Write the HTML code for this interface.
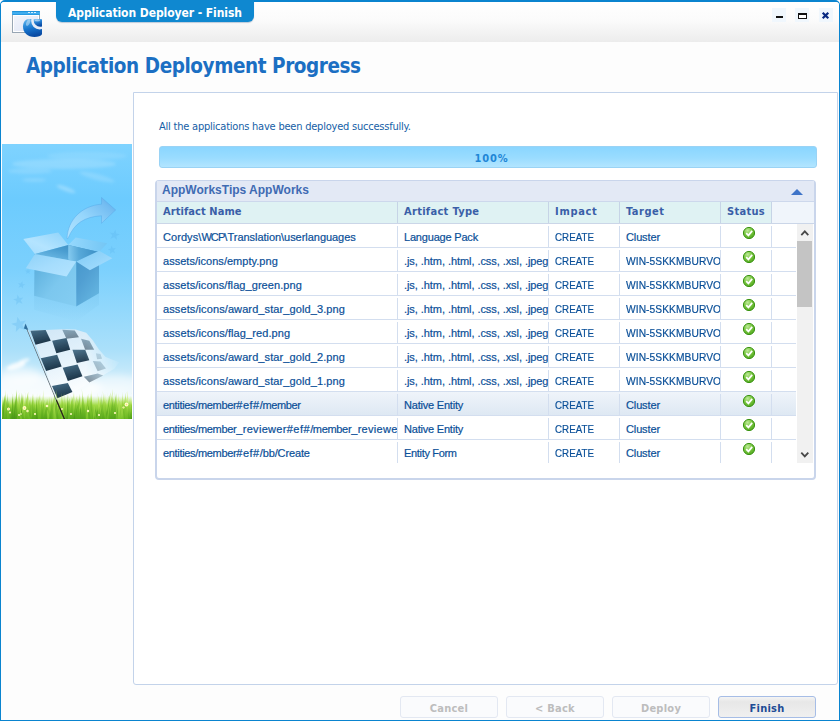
<!DOCTYPE html>
<html>
<head>
<meta charset="utf-8">
<title>Application Deployer - Finish</title>
<style>
html,body{margin:0;padding:0;}
body{width:840px;height:721px;overflow:hidden;background:#fff;position:relative;font-family:"Liberation Sans",sans-serif;}
.abs{position:absolute;}
#frame{left:0;top:0;width:838px;height:718px;border:1px solid #0a84cf;border-top:2px solid #0a84cf;border-radius:5px 5px 0 0;background:#fdfdfd;overflow:hidden;}
#hdr{left:1px;top:2px;width:838px;height:40px;border-radius:3px 3px 0 0;background:linear-gradient(#ffffff 0%,#fbfbfb 45%,#ececec 100%);}
#tab{left:56px;top:0;width:198px;height:22px;background:#0f88d0;border-radius:0 0 6px 6px;box-shadow:0 1px 1px rgba(0,60,120,.25);color:#fff;font:bold 12px "DejaVu Sans Condensed","DejaVu Sans",sans-serif;line-height:26px;}
#tab span{position:absolute;left:12px;top:0;white-space:nowrap;letter-spacing:-0.07px;}
.wb{top:8px;width:14px;height:14px;background:#f0f7fd;}
#title{left:26px;top:53px;font:bold 20.5px "DejaVu Sans Condensed","DejaVu Sans",sans-serif;color:#1b6fc3;white-space:nowrap;letter-spacing:-0.44px;line-height:26px;}
#panel{left:133px;top:92px;width:703px;height:591px;border:1px solid #c3d3ea;border-radius:0 0 3px 3px;background:#fff;}
#msg{left:159px;top:120px;letter-spacing:-0.22px;font:11px "DejaVu Sans Condensed","DejaVu Sans",sans-serif;color:#155ea6;white-space:nowrap;line-height:14px;}
#prog{left:159px;top:146px;width:656px;height:20px;border:1px solid #9ad3f5;border-radius:3px;background:linear-gradient(#8ad6ff 0%,#9adcff 55%,#b2e5ff 100%);text-align:center;font:bold 11px "DejaVu Sans Condensed","DejaVu Sans",sans-serif;color:#1f86d6;line-height:23px;letter-spacing:.9px;text-indent:7px;}
#grp{left:155px;top:180px;width:657px;height:297px;border:2px solid #c9d5eb;border-top-width:1px;border-radius:4px;background:#fff;}
#grph{left:157px;top:181px;width:657px;height:20px;background:#e3e9f5;border-bottom:1px solid #cdd8ec;font:bold 12px "Liberation Sans",sans-serif;color:#3f6bb3;line-height:19px;}
#colh{left:157px;top:202px;width:657px;height:21px;background:#f0f5fb;border-bottom:1px solid #cbd6e8;}
.ch{position:absolute;top:0;height:21px;background:#dff2f3;border-right:1px solid #c6d4e6;font:bold 11px "DejaVu Sans Condensed","DejaVu Sans",sans-serif;color:#3a5fa8;line-height:19px;text-indent:6px;white-space:nowrap;overflow:hidden;letter-spacing:.15px;}
.row{position:absolute;left:157px;width:639px;height:23px;border-bottom:1px solid #d3deef;font:11px "Liberation Sans",sans-serif;color:#0a4f98;letter-spacing:0.07px;-webkit-text-stroke:0.2px #0a4f98;}
.row.last{border-bottom:none;}
.row.last .c{height:21px;}
.row.sel{background:linear-gradient(#eff4fa,#dee8f3);}
.c{position:absolute;top:2px;height:22px;border-right:1px solid #d3deef;line-height:23px;text-indent:6px;white-space:nowrap;overflow:hidden;}
.c1{left:0;width:240px;}
.c2{left:241px;width:150px;}
.c3{left:392px;width:70px;}
.c4{left:463px;width:100px;}
.c5{left:564px;width:50px;}
.ok{position:absolute;left:21px;top:0px;width:14px;height:14px;}
.sx{display:inline-block;transform-origin:0 50%;text-indent:0;}
.btn{top:696px;width:96px;height:20px;border:1px solid #e3e8f2;border-radius:3px;background:#fafbfd;text-align:center;font:bold 11px "DejaVu Sans Condensed","DejaVu Sans",sans-serif;color:#bdbdbd;line-height:23px;letter-spacing:.25px;}
#fin{border-color:#a6bde6;background:linear-gradient(#f4f4f4 0%,#e7e7e7 25%,#f0f0f0 100%);color:#1e4c95;}
</style>
</head>
<body>
<div id="frame" class="abs"></div>
<div id="hdr" class="abs"></div>
<div id="tab" class="abs"><span>Application Deployer - Finish</span></div>

<!-- app icon -->
<svg class="abs" style="left:8px;top:6px" width="40" height="40" viewBox="8 6 40 40">
<defs>
<linearGradient id="tb" x1="0" y1="0" x2="0" y2="1"><stop offset="0" stop-color="#0f86d4"/><stop offset=".5" stop-color="#4fb8f5"/><stop offset="1" stop-color="#1a8fdc"/></linearGradient>
<linearGradient id="wb" x1="0" y1="0" x2="1" y2="1"><stop offset="0" stop-color="#f2f4fb"/><stop offset="1" stop-color="#dfe5f5"/></linearGradient>
<linearGradient id="cg" x1="0" y1="0" x2="0.25" y2="1"><stop offset="0" stop-color="#6fbdf0"/><stop offset=".3" stop-color="#3a97df"/><stop offset=".6" stop-color="#1673cc"/><stop offset="1" stop-color="#0a4ca4"/></linearGradient>
<linearGradient id="cg2" x1="0" y1=".45" x2="0.15" y2="1"><stop offset="0" stop-color="#8ccbf4"/><stop offset=".4" stop-color="#2a86d8"/><stop offset="1" stop-color="#0a4ca4"/></linearGradient>
<clipPath id="cc"><rect x="20" y="19" width="22" height="21" rx="1"/></clipPath>
</defs>
<rect x="12.5" y="11.5" width="27" height="21" fill="#fff" stroke="#98a6b4" stroke-width="1"/>
<rect x="14" y="16" width="24" height="15" fill="url(#wb)"/>
<rect x="12" y="11" width="28" height="4" rx="1" fill="url(#tb)"/>
<rect x="28" y="12" width="2" height="1" fill="#d8f0ff"/><rect x="31" y="12" width="2" height="1" fill="#d8f0ff"/><rect x="34" y="12" width="2" height="1" fill="#d8f0ff"/>
<g clip-path="url(#cc)">
<path d="M29,19 H42 V34.2 C41,36 38,37 34.5,37 C27.5,37 23,32.5 23,26.5 C23,22 25.5,19 29,19 Z" fill="url(#cg)"/>
<circle cx="39.6" cy="21" r="8.4" fill="#e6ecf7"/>
<circle cx="40.2" cy="20.1" r="6.6" fill="url(#cg2)"/>
<ellipse cx="28.2" cy="22.5" rx="1.7" ry="3.6" fill="#fff" opacity=".4" transform="rotate(25 28.2 22.5)"/><ellipse cx="37.5" cy="20.6" rx="2.6" ry="1" fill="#fff" opacity=".45"/>
</g>
</svg>

<!-- window buttons -->
<div class="abs wb" style="left:772px"></div>
<div class="abs wb" style="left:795px"></div>
<div class="abs wb" style="left:819px"></div>
<svg class="abs" style="left:772px;top:8px" width="62" height="14" viewBox="772 8 62 14">
<rect x="776" y="16" width="7" height="2" fill="#111"/>
<rect x="798.5" y="13.5" width="8" height="5" fill="#fff" stroke="#111" stroke-width="1"/><rect x="798" y="13" width="9" height="2" fill="#111"/>
<path d="M822.7 12.7 L828.3 18.3 M828.3 12.7 L822.7 18.3" stroke="#0a2a82" stroke-width="2.2"/>
</svg>

<div id="title" class="abs">Application Deployment Progress</div>

<div id="panel" class="abs"></div>
<div id="msg" class="abs">All the applications have been deployed successfully.</div>
<div id="prog" class="abs">100%</div>

<div id="grp" class="abs"></div>
<div id="grph" class="abs"><span style="margin-left:5px">AppWorksTips AppWorks</span></div>
<svg class="abs" style="left:790px;top:187px" width="14" height="10"><path d="M1 8 L7 2 L13 8 Z" fill="#3f74c8"/></svg>
<div id="colh" class="abs">
<div class="ch" style="left:0;width:240px;letter-spacing:.07px">Artifact Name</div>
<div class="ch" style="left:241px;width:150px;letter-spacing:.3px">Artifact Type</div>
<div class="ch" style="left:392px;width:70px;letter-spacing:.7px">Impact</div>
<div class="ch" style="left:463px;width:100px;letter-spacing:.5px">Target</div>
<div class="ch" style="left:564px;width:50px;letter-spacing:.3px">Status</div>
</div>

<svg width="0" height="0" style="position:absolute"><defs>
<radialGradient id="okg" cx="0.38" cy="0.28" r="0.8"><stop offset="0" stop-color="#bdea98"/><stop offset=".45" stop-color="#7cc843"/><stop offset="1" stop-color="#4ea51b"/></radialGradient>
</defs></svg>
<div class="row" style="top:224px"><div class="c c1">Cordys\<span style="letter-spacing:-0.9px">WCP</span>\<span style="letter-spacing:-0.04px">Translation\userlanguages</span></div><div class="c c2"><span style="letter-spacing:-0.19px">Language Pack</span></div><div class="c c3"><span class="sx" style="transform:scaleX(0.885)">CREATE</span></div><div class="c c4"><span style="letter-spacing:-0.13px">Cluster</span></div><div class="c c5"><svg class="ok" viewBox="0 0 14 14"><circle cx="7" cy="7" r="5.6" fill="url(#okg)" stroke="#3a9412" stroke-width="1"/><path d="M4.2 7.1 L6.4 9.4 L10.2 4.9" fill="none" stroke="#fff" stroke-width="1.7"/></svg></div></div>
<div class="row" style="top:248px"><div class="c c1"><span style="letter-spacing:0.03px">assets/icons/empty.png</span></div><div class="c c2"><span style="letter-spacing:-0.065px">.js, .htm, .html, .css, .xsl, .jpeg</span></div><div class="c c3"><span class="sx" style="transform:scaleX(0.885)">CREATE</span></div><div class="c c4"><span class="sx" style="transform:scaleX(0.93)">WIN-5SKKMBURVO</span></div><div class="c c5"><svg class="ok" viewBox="0 0 14 14"><circle cx="7" cy="7" r="5.6" fill="url(#okg)" stroke="#3a9412" stroke-width="1"/><path d="M4.2 7.1 L6.4 9.4 L10.2 4.9" fill="none" stroke="#fff" stroke-width="1.7"/></svg></div></div>
<div class="row" style="top:272px"><div class="c c1">assets/icons/flag_green.png</div><div class="c c2"><span style="letter-spacing:-0.065px">.js, .htm, .html, .css, .xsl, .jpeg</span></div><div class="c c3"><span class="sx" style="transform:scaleX(0.885)">CREATE</span></div><div class="c c4"><span class="sx" style="transform:scaleX(0.93)">WIN-5SKKMBURVO</span></div><div class="c c5"><svg class="ok" viewBox="0 0 14 14"><circle cx="7" cy="7" r="5.6" fill="url(#okg)" stroke="#3a9412" stroke-width="1"/><path d="M4.2 7.1 L6.4 9.4 L10.2 4.9" fill="none" stroke="#fff" stroke-width="1.7"/></svg></div></div>
<div class="row" style="top:296px"><div class="c c1"><span style="letter-spacing:0.1px">assets/icons/award_star_gold_3.png</span></div><div class="c c2"><span style="letter-spacing:-0.065px">.js, .htm, .html, .css, .xsl, .jpeg</span></div><div class="c c3"><span class="sx" style="transform:scaleX(0.885)">CREATE</span></div><div class="c c4"><span class="sx" style="transform:scaleX(0.93)">WIN-5SKKMBURVO</span></div><div class="c c5"><svg class="ok" viewBox="0 0 14 14"><circle cx="7" cy="7" r="5.6" fill="url(#okg)" stroke="#3a9412" stroke-width="1"/><path d="M4.2 7.1 L6.4 9.4 L10.2 4.9" fill="none" stroke="#fff" stroke-width="1.7"/></svg></div></div>
<div class="row" style="top:320px"><div class="c c1"><span style="letter-spacing:0.1px">assets/icons/flag_red.png</span></div><div class="c c2"><span style="letter-spacing:-0.065px">.js, .htm, .html, .css, .xsl, .jpeg</span></div><div class="c c3"><span class="sx" style="transform:scaleX(0.885)">CREATE</span></div><div class="c c4"><span class="sx" style="transform:scaleX(0.93)">WIN-5SKKMBURVO</span></div><div class="c c5"><svg class="ok" viewBox="0 0 14 14"><circle cx="7" cy="7" r="5.6" fill="url(#okg)" stroke="#3a9412" stroke-width="1"/><path d="M4.2 7.1 L6.4 9.4 L10.2 4.9" fill="none" stroke="#fff" stroke-width="1.7"/></svg></div></div>
<div class="row" style="top:344px"><div class="c c1"><span style="letter-spacing:0.1px">assets/icons/award_star_gold_2.png</span></div><div class="c c2"><span style="letter-spacing:-0.065px">.js, .htm, .html, .css, .xsl, .jpeg</span></div><div class="c c3"><span class="sx" style="transform:scaleX(0.885)">CREATE</span></div><div class="c c4"><span class="sx" style="transform:scaleX(0.93)">WIN-5SKKMBURVO</span></div><div class="c c5"><svg class="ok" viewBox="0 0 14 14"><circle cx="7" cy="7" r="5.6" fill="url(#okg)" stroke="#3a9412" stroke-width="1"/><path d="M4.2 7.1 L6.4 9.4 L10.2 4.9" fill="none" stroke="#fff" stroke-width="1.7"/></svg></div></div>
<div class="row" style="top:368px"><div class="c c1"><span style="letter-spacing:0.1px">assets/icons/award_star_gold_1.png</span></div><div class="c c2"><span style="letter-spacing:-0.065px">.js, .htm, .html, .css, .xsl, .jpeg</span></div><div class="c c3"><span class="sx" style="transform:scaleX(0.885)">CREATE</span></div><div class="c c4"><span class="sx" style="transform:scaleX(0.93)">WIN-5SKKMBURVO</span></div><div class="c c5"><svg class="ok" viewBox="0 0 14 14"><circle cx="7" cy="7" r="5.6" fill="url(#okg)" stroke="#3a9412" stroke-width="1"/><path d="M4.2 7.1 L6.4 9.4 L10.2 4.9" fill="none" stroke="#fff" stroke-width="1.7"/></svg></div></div>
<div class="row sel" style="top:392px"><div class="c c1"><span style="letter-spacing:-0.33px">entities/member</span><span style="letter-spacing:0.5px">#ef#</span><span style="letter-spacing:-0.38px">/member</span></div><div class="c c2"><span style="letter-spacing:-0.21px">Native Entity</span></div><div class="c c3"><span class="sx" style="transform:scaleX(0.885)">CREATE</span></div><div class="c c4"><span style="letter-spacing:-0.13px">Cluster</span></div><div class="c c5"><svg class="ok" viewBox="0 0 14 14"><circle cx="7" cy="7" r="5.6" fill="url(#okg)" stroke="#3a9412" stroke-width="1"/><path d="M4.2 7.1 L6.4 9.4 L10.2 4.9" fill="none" stroke="#fff" stroke-width="1.7"/></svg></div></div>
<div class="row" style="top:416px"><div class="c c1"><span style="letter-spacing:-0.33px">entities/member</span><span style="letter-spacing:0.3px">_reviewer</span><span style="letter-spacing:0.5px">#ef#</span><span style="letter-spacing:-0.33px">/member</span><span style="letter-spacing:0.3px">_reviewer</span></div><div class="c c2"><span style="letter-spacing:-0.21px">Native Entity</span></div><div class="c c3"><span class="sx" style="transform:scaleX(0.885)">CREATE</span></div><div class="c c4"><span style="letter-spacing:-0.13px">Cluster</span></div><div class="c c5"><svg class="ok" viewBox="0 0 14 14"><circle cx="7" cy="7" r="5.6" fill="url(#okg)" stroke="#3a9412" stroke-width="1"/><path d="M4.2 7.1 L6.4 9.4 L10.2 4.9" fill="none" stroke="#fff" stroke-width="1.7"/></svg></div></div>
<div class="row last" style="top:440px"><div class="c c1"><span style="letter-spacing:-0.33px">entities/member</span><span style="letter-spacing:0.5px">#ef#</span><span style="letter-spacing:-0.13px">/bb/Create</span></div><div class="c c2"><span style="letter-spacing:-0.32px">Entity Form</span></div><div class="c c3"><span class="sx" style="transform:scaleX(0.885)">CREATE</span></div><div class="c c4"><span style="letter-spacing:-0.13px">Cluster</span></div><div class="c c5"><svg class="ok" viewBox="0 0 14 14"><circle cx="7" cy="7" r="5.6" fill="url(#okg)" stroke="#3a9412" stroke-width="1"/><path d="M4.2 7.1 L6.4 9.4 L10.2 4.9" fill="none" stroke="#fff" stroke-width="1.7"/></svg></div></div>
<div class="abs" style="left:797px;top:224px;width:16px;height:239px;background:#f1f1f1"></div>
<div class="abs" style="left:797px;top:241px;width:15px;height:66px;background:#c4c4c4"></div>
<svg class="abs" style="left:797px;top:224px" width="16" height="239"><path d="M4.3 11.2 L7.8 7.4 L11.3 11.2" fill="none" stroke="#484848" stroke-width="1.8"/><path d="M4.3 228.6 L7.8 232.4 L11.3 228.6" fill="none" stroke="#484848" stroke-width="1.8"/></svg>
<div class="abs btn" style="left:400px">Cancel</div>
<div class="abs btn" style="left:506px">&lt; Back</div>
<div class="abs btn" style="left:612px">Deploy</div>
<div class="abs btn" id="fin" style="left:718px">Finish</div>
<svg class="abs" style="left:2px;top:144px" width="130" height="275" viewBox="0 0 130 275">
<defs>
<linearGradient id="sky" x1="0" y1="0" x2="0" y2="1">
<stop offset="0" stop-color="#7fd3ff"/><stop offset=".2" stop-color="#6ccbfe"/><stop offset=".45" stop-color="#7bd0fd"/><stop offset=".6" stop-color="#92d8fc"/><stop offset=".75" stop-color="#abe0fa"/><stop offset=".87" stop-color="#d2edfa"/><stop offset=".93" stop-color="#f0f9fd"/><stop offset="1" stop-color="#f4fbfd"/>
</linearGradient>
<filter id="b1" x="-20%" y="-50%" width="140%" height="200%"><feGaussianBlur stdDeviation="1.6"/></filter>
<filter id="b2" x="-20%" y="-50%" width="140%" height="200%"><feGaussianBlur stdDeviation="3.5"/></filter>
<filter id="b3"><feGaussianBlur stdDeviation="0.35"/></filter>
<linearGradient id="fl1" x1="1" y1="0" x2="0" y2="1"><stop offset="0" stop-color="#8ed3fa"/><stop offset=".6" stop-color="#b4e4ff"/><stop offset="1" stop-color="#a4dcfd"/></linearGradient>
<linearGradient id="fl2" x1="0" y1="0" x2="1" y2="0"><stop offset="0" stop-color="#96d8fd"/><stop offset="1" stop-color="#74c6f4"/></linearGradient>
<linearGradient id="fl3" x1="0" y1="0" x2="1" y2="1"><stop offset="0" stop-color="#8fd2f8"/><stop offset=".5" stop-color="#a6ddfd"/><stop offset="1" stop-color="#b4e4ff"/></linearGradient>
<linearGradient id="fl4" x1="0" y1="0" x2="1" y2="1"><stop offset="0" stop-color="#7fcaf5"/><stop offset="1" stop-color="#a8dfff"/></linearGradient>
<linearGradient id="in1" x1="0" y1="1" x2="1" y2="0"><stop offset="0" stop-color="#7cc6ee"/><stop offset=".55" stop-color="#4a9dd0"/><stop offset="1" stop-color="#3688bd"/></linearGradient>
<linearGradient id="in2" x1="0" y1="0" x2="1" y2="0"><stop offset="0" stop-color="#8fd2f5"/><stop offset=".35" stop-color="#5aabdb"/><stop offset="1" stop-color="#3a8ec4"/></linearGradient>
<linearGradient id="fa1" x1="0" y1="0" x2="1" y2="1"><stop offset="0" stop-color="#54a9d8"/><stop offset=".55" stop-color="#7cc7ee"/><stop offset="1" stop-color="#84cdf2"/></linearGradient>
<linearGradient id="fa2" x1="0" y1="0" x2=".6" y2="1"><stop offset="0" stop-color="#4396ca"/><stop offset=".5" stop-color="#519fd2"/><stop offset="1" stop-color="#63b4e0"/></linearGradient>
<linearGradient id="ar" x1="0" y1="1" x2="1" y2="0"><stop offset="0" stop-color="#b2e4ff"/><stop offset=".45" stop-color="#96d6fc"/><stop offset=".8" stop-color="#74bdf2"/><stop offset="1" stop-color="#5aa6e6"/></linearGradient>
<linearGradient id="rf" x1="0" y1="0" x2="0" y2="1"><stop offset="0" stop-color="#7cc6ee" stop-opacity=".45"/><stop offset="1" stop-color="#7cc6ee" stop-opacity="0"/></linearGradient>
<linearGradient id="fm" x1="0" y1="0" x2="1" y2="0"><stop offset="0" stop-color="#fff"/><stop offset=".62" stop-color="#fff"/><stop offset=".97" stop-color="#fff" stop-opacity="0"/></linearGradient>
<mask id="fmask" maskUnits="userSpaceOnUse" x="0" y="0" width="760" height="760"><rect x="0" y="0" width="760" height="760" fill="url(#fm)"/></mask>
<linearGradient id="fw" x1="0" y1="0" x2=".4" y2="1"><stop offset="0" stop-color="#cfe6f6"/><stop offset=".5" stop-color="#e4f2fb"/><stop offset="1" stop-color="#ffffff"/></linearGradient>
<linearGradient id="fd" x1="0" y1="0" x2=".3" y2="1"><stop offset="0" stop-color="#47708a"/><stop offset="1" stop-color="#1d3548"/></linearGradient>
<linearGradient id="g1" gradientUnits="userSpaceOnUse" x1="0" y1="242" x2="0" y2="275"><stop offset="0" stop-color="#e4f79a"/><stop offset=".4" stop-color="#a6dc44"/><stop offset="1" stop-color="#63b21e"/></linearGradient>
<linearGradient id="g2" gradientUnits="userSpaceOnUse" x1="0" y1="242" x2="0" y2="275"><stop offset="0" stop-color="#d2f07c"/><stop offset=".4" stop-color="#8ed034"/><stop offset="1" stop-color="#55a51a"/></linearGradient>
<linearGradient id="g3" gradientUnits="userSpaceOnUse" x1="0" y1="242" x2="0" y2="275"><stop offset="0" stop-color="#f2fbb8"/><stop offset=".45" stop-color="#c2e95e"/><stop offset="1" stop-color="#7cc42c"/></linearGradient>
<linearGradient id="g4" gradientUnits="userSpaceOnUse" x1="0" y1="242" x2="0" y2="275"><stop offset="0" stop-color="#b4e056"/><stop offset=".4" stop-color="#6fba24"/><stop offset="1" stop-color="#479616"/></linearGradient>
<linearGradient id="gr" x1="0" y1="0" x2="0" y2="1"><stop offset="0" stop-color="#b4e35f" stop-opacity="0"/><stop offset=".4" stop-color="#a0da44"/><stop offset="1" stop-color="#5aaa1a"/></linearGradient>
</defs>
<rect width="130" height="275" fill="url(#sky)"/>
<g filter="url(#b1)" fill="#fff"><ellipse cx="62" cy="20" rx="52" ry="5" opacity=".17"/><ellipse cx="85" cy="12" rx="40" ry="4" opacity=".1"/><ellipse cx="28" cy="27" rx="22" ry="3" opacity=".13"/><ellipse cx="32" cy="36" rx="12" ry="2" opacity=".14"/><ellipse cx="64" cy="45" rx="10" ry="2.2" transform="rotate(20 64 45)" opacity=".26"/><ellipse cx="95" cy="33" rx="18" ry="3" transform="rotate(15 95 33)" opacity=".15"/></g>
<g filter="url(#b2)" fill="#fff"><ellipse cx="40" cy="245" rx="60" ry="14" opacity=".75"/><ellipse cx="105" cy="252" rx="40" ry="8" opacity=".4"/><ellipse cx="18" cy="232" rx="22" ry="9" opacity=".6"/><ellipse cx="112" cy="240" rx="30" ry="9" opacity=".55"/></g>
<g filter="url(#b1)" fill="#fff"><ellipse cx="14" cy="222" rx="10" ry="3.2" transform="rotate(-18 14 222)" opacity=".8"/><ellipse cx="22" cy="217" rx="6" ry="2" transform="rotate(-20 22 217)" opacity=".7"/></g>
<g fill="#5cb6ee" opacity=".3">
<polygon points="113.5,85.6 114.2,89.4 117.9,90.2 114.5,92.1 114.9,95.9 112.1,93.3 108.5,94.8 110.2,91.3 107.6,88.4 111.5,88.9"/>
<polygon points="109.4,101.5 110.9,104.3 114.0,104.0 111.9,106.3 113.1,109.2 110.3,107.9 107.9,110.0 108.3,106.8 105.6,105.2 108.7,104.6"/>
<polygon points="26.0,124.5 26.7,126.5 28.9,126.6 27.2,127.9 27.8,129.9 26.0,128.8 24.2,129.9 24.8,127.9 23.1,126.6 25.3,126.5"/>
<polygon points="20.3,137.1 20.7,139.9 23.5,140.6 21.0,141.8 21.1,144.7 19.2,142.6 16.5,143.7 17.8,141.2 16.0,139.0 18.8,139.5"/>
<polygon points="15.5,150.6 17.5,153.9 21.4,153.4 18.8,156.3 20.5,159.8 16.9,158.3 14.1,160.9 14.5,157.1 11.1,155.2 14.8,154.4"/>
<polygon points="15.4,172.8 18.5,177.5 24.0,176.6 20.4,181.0 23.0,186.0 17.8,183.9 13.8,187.9 14.2,182.3 9.1,179.8 14.6,178.4"/>
</g>
<g transform="translate(8,46) scale(0.16639)">
<polygon points="145,630 398,700 535,618 535,690 398,790 145,720" fill="url(#rf)"/>
<polygon points="80,295 290,255 350,330 150,385" fill="url(#fl1)"/>
<polygon points="350,330 395,285 585,320 535,372" fill="url(#fl2)"/>
<polygon points="150,385 350,330 535,372 398,432" fill="url(#in1)"/>
<polygon points="350,330 535,372 398,432 350,418" fill="url(#in2)" opacity=".85"/>
<polygon points="148,385 398,430 398,700 145,635" fill="url(#fa1)"/>
<polygon points="398,430 535,372 535,620 398,700" fill="url(#fa2)"/>
<polygon points="150,385 398,430 340,520 95,470" fill="url(#fl3)"/>
<polygon points="398,430 535,365 615,410 480,482" fill="url(#fl4)"/>
<path d="M343,292 C346,180 430,95 550,85 L550,45 L635,120 L550,200 L550,155 C450,160 385,200 348,292 Z" fill="url(#ar)" stroke="#55a6e6" stroke-width="3.5" stroke-opacity=".75"/>
</g>
<g transform="translate(18,176) scale(0.13870)" filter="url(#b3)">
<g mask="url(#fmask)">
<polygon points="70,75 185,72 305,66 400,68 477,92 526,148 568,211 617,267 715,305 680,351 596,400 498,456 379,521 270,572" fill="url(#fw)"/>
<polygon points="75,78 185,72 222,150 112,178" fill="url(#fd)" opacity="1"/>
<polygon points="232,150 335,130 362,215 262,240" fill="url(#fd)" opacity="1"/>
<polygon points="150,275 268,250 300,335 188,368" fill="url(#fd)" opacity="1"/>
<polygon points="378,215 470,215 500,290 410,310" fill="url(#fd)" opacity="0.95"/>
<polygon points="308,345 415,320 450,405 345,440" fill="url(#fd)" opacity="1"/>
<polygon points="230,475 345,455 378,520 270,565" fill="url(#fd)" opacity="1"/>
<polygon points="305,70 395,75 425,125 335,135" fill="url(#fd)" opacity="0.55"/>
<polygon points="440,135 500,150 535,215 470,215" fill="url(#fd)" opacity="0.55"/>
<polygon points="525,295 580,300 620,350 560,370" fill="url(#fd)" opacity="0.45"/>
<polygon points="460,410 560,385 600,400 500,450" fill="url(#fd)" opacity="0.6"/>
<polygon points="547,239 580,245 592,280 556,283" fill="url(#fd)" opacity="0.3"/>
</g>
</g>
<rect x="0" y="252" width="130" height="23" fill="url(#gr)"/>
<g><path d="M40.4,275 Q41.5,267.5 41.6,262.4 Q41.9,268.7 42.4,275 Z" fill="url(#g2)" opacity="0.83"/><path d="M118.8,275 Q120.0,258.5 120.3,247.5 Q120.5,261.2 121.0,275 Z" fill="url(#g1)" opacity="0.93"/><path d="M12.7,275 Q14.8,266.7 15.1,261.2 Q15.5,268.1 16.4,275 Z" fill="url(#g2)" opacity="0.62"/><path d="M26.3,275 Q27.7,263.3 27.9,255.5 Q28.3,265.3 28.9,275 Z" fill="url(#g3)" opacity="0.72"/><path d="M105.8,275 Q107.1,267.2 106.5,261.9 Q107.6,268.5 108.9,275 Z" fill="url(#g3)" opacity="0.88"/><path d="M72.2,275 Q74.2,262.7 75.6,254.5 Q75.0,264.7 75.1,275 Z" fill="url(#g2)" opacity="0.83"/><path d="M57.1,275 Q58.2,265.9 56.9,259.9 Q58.6,267.5 60.3,275 Z" fill="url(#g3)" opacity="0.72"/><path d="M62.8,275 Q63.4,265.5 61.4,259.2 Q63.8,267.1 65.9,275 Z" fill="url(#g3)" opacity="0.77"/><path d="M98.5,275 Q99.8,267.4 100.6,262.4 Q100.3,268.7 100.4,275 Z" fill="url(#g3)" opacity="0.83"/><path d="M113.8,275 Q115.5,265.8 115.9,259.7 Q116.1,267.3 116.8,275 Z" fill="url(#g2)" opacity="0.63"/><path d="M9.6,275 Q11.0,266.2 12.2,260.4 Q11.6,267.7 11.5,275 Z" fill="url(#g2)" opacity="0.86"/><path d="M129.8,275 Q131.4,260.6 132.3,251.0 Q132.1,263.0 132.4,275 Z" fill="url(#g1)" opacity="0.98"/><path d="M44.5,275 Q45.2,262.8 44.1,254.6 Q45.5,264.8 46.8,275 Z" fill="url(#g4)" opacity="0.70"/><path d="M48.9,275 Q51.2,258.4 53.1,247.3 Q52.0,261.2 51.8,275 Z" fill="url(#g2)" opacity="0.95"/><path d="M33.5,275 Q36.3,264.8 38.5,257.9 Q37.3,266.5 37.1,275 Z" fill="url(#g1)" opacity="0.63"/><path d="M17.2,275 Q17.8,257.0 16.7,245.0 Q18.1,260.0 19.4,275 Z" fill="url(#g1)" opacity="0.77"/><path d="M45.9,275 Q47.5,263.2 47.6,255.4 Q48.2,265.2 49.1,275 Z" fill="url(#g3)" opacity="0.86"/><path d="M95.3,275 Q97.5,264.3 98.4,257.2 Q98.4,266.1 99.0,275 Z" fill="url(#g3)" opacity="0.76"/><path d="M50.5,275 Q50.6,267.9 48.4,263.2 Q50.6,269.1 52.4,275 Z" fill="url(#g1)" opacity="0.78"/><path d="M11.3,275 Q12.8,262.9 13.0,254.8 Q13.4,264.9 14.2,275 Z" fill="url(#g2)" opacity="0.85"/><path d="M5.9,275 Q8.4,266.9 10.6,261.5 Q9.3,268.2 9.0,275 Z" fill="url(#g3)" opacity="0.75"/><path d="M13.1,275 Q14.4,260.3 14.3,250.6 Q15.0,262.8 15.8,275 Z" fill="url(#g1)" opacity="0.66"/><path d="M96.9,275 Q98.5,261.4 98.6,252.4 Q99.1,263.7 100.0,275 Z" fill="url(#g1)" opacity="0.98"/><path d="M67.9,275 Q68.8,267.5 69.0,262.5 Q69.2,268.8 69.7,275 Z" fill="url(#g4)" opacity="0.95"/><path d="M90.2,275 Q91.9,266.3 93.2,260.6 Q92.5,267.8 92.4,275 Z" fill="url(#g3)" opacity="0.82"/><path d="M63.7,275 Q65.9,262.5 67.2,254.2 Q66.8,264.6 67.0,275 Z" fill="url(#g1)" opacity="0.92"/><path d="M106.2,275 Q107.4,261.5 106.6,252.4 Q107.8,263.7 109.1,275 Z" fill="url(#g1)" opacity="1.00"/><path d="M102.4,275 Q103.5,264.2 102.8,257.0 Q104.0,266.0 105.4,275 Z" fill="url(#g4)" opacity="1.00"/><path d="M124.8,275 Q125.3,265.3 123.8,258.8 Q125.6,266.9 127.1,275 Z" fill="url(#g1)" opacity="0.79"/><path d="M128.8,275 Q130.3,256.7 131.0,244.5 Q130.9,259.8 131.3,275 Z" fill="url(#g4)" opacity="0.65"/><path d="M48.3,275 Q49.9,261.7 49.6,252.9 Q50.6,264.0 51.9,275 Z" fill="url(#g4)" opacity="0.73"/><path d="M104.0,275 Q106.2,259.1 108.4,248.5 Q107.1,261.7 106.6,275 Z" fill="url(#g4)" opacity="0.66"/><path d="M129.7,275 Q131.4,268.7 132.2,264.5 Q132.1,269.8 132.4,275 Z" fill="url(#g3)" opacity="0.93"/><path d="M127.9,275 Q128.6,262.3 126.8,253.8 Q128.9,264.4 130.8,275 Z" fill="url(#g1)" opacity="0.92"/><path d="M94.3,275 Q96.4,268.0 98.7,263.3 Q97.1,269.1 96.4,275 Z" fill="url(#g1)" opacity="0.93"/><path d="M25.1,275 Q26.5,266.4 26.9,260.7 Q27.0,267.9 27.4,275 Z" fill="url(#g2)" opacity="0.82"/><path d="M108.0,275 Q110.1,268.4 110.9,264.0 Q111.0,269.5 111.6,275 Z" fill="url(#g3)" opacity="0.77"/><path d="M119.6,275 Q120.0,263.9 117.6,256.5 Q120.2,265.7 122.4,275 Z" fill="url(#g2)" opacity="0.91"/><path d="M78.5,275 Q79.8,261.1 80.4,251.8 Q80.3,263.4 80.6,275 Z" fill="url(#g1)" opacity="0.82"/><path d="M40.0,275 Q40.9,263.7 38.9,256.2 Q41.3,265.6 43.4,275 Z" fill="url(#g3)" opacity="0.62"/><path d="M22.7,275 Q24.5,258.4 26.4,247.3 Q25.1,261.1 24.6,275 Z" fill="url(#g1)" opacity="0.78"/><path d="M78.5,275 Q80.0,263.8 79.7,256.4 Q80.6,265.7 81.7,275 Z" fill="url(#g3)" opacity="0.92"/><path d="M64.3,275 Q66.9,266.5 69.0,260.8 Q67.9,267.9 67.8,275 Z" fill="url(#g3)" opacity="0.96"/><path d="M23.9,275 Q24.8,264.4 23.9,257.4 Q25.1,266.2 26.4,275 Z" fill="url(#g4)" opacity="0.70"/><path d="M6.0,275 Q7.1,262.2 5.4,253.6 Q7.5,264.3 9.6,275 Z" fill="url(#g4)" opacity="0.86"/><path d="M45.7,275 Q47.6,266.4 48.8,260.7 Q48.3,267.8 48.4,275 Z" fill="url(#g1)" opacity="0.76"/><path d="M62.2,275 Q63.1,258.9 62.8,248.2 Q63.5,261.6 64.4,275 Z" fill="url(#g3)" opacity="0.76"/><path d="M53.2,275 Q54.4,258.7 54.2,247.8 Q54.8,261.4 55.7,275 Z" fill="url(#g4)" opacity="0.61"/><path d="M41.5,275 Q43.4,262.6 45.8,254.4 Q44.2,264.7 43.4,275 Z" fill="url(#g1)" opacity="0.99"/><path d="M10.9,275 Q11.3,257.2 9.4,245.3 Q11.5,260.2 13.2,275 Z" fill="url(#g2)" opacity="0.94"/><path d="M87.1,275 Q88.6,259.4 88.7,248.9 Q89.2,262.0 90.0,275 Z" fill="url(#g2)" opacity="0.88"/><path d="M8.7,275 Q9.1,268.4 7.0,264.0 Q9.3,269.5 11.3,275 Z" fill="url(#g1)" opacity="0.85"/><path d="M104.5,275 Q106.2,268.1 108.0,263.6 Q106.8,269.3 106.4,275 Z" fill="url(#g2)" opacity="0.60"/><path d="M129.7,275 Q130.3,264.7 128.0,257.9 Q130.6,266.4 132.8,275 Z" fill="url(#g4)" opacity="0.70"/><path d="M11.5,275 Q12.3,259.3 11.3,248.8 Q12.6,261.9 13.9,275 Z" fill="url(#g1)" opacity="0.72"/><path d="M64.1,275 Q64.5,267.2 63.3,262.0 Q64.7,268.5 65.9,275 Z" fill="url(#g1)" opacity="0.61"/><path d="M64.6,275 Q65.6,259.0 65.4,248.4 Q66.1,261.7 66.9,275 Z" fill="url(#g4)" opacity="0.93"/><path d="M54.6,275 Q55.9,264.0 56.0,256.6 Q56.4,265.8 57.2,275 Z" fill="url(#g4)" opacity="0.69"/><path d="M27.1,275 Q28.0,267.0 26.2,261.6 Q28.4,268.3 30.4,275 Z" fill="url(#g2)" opacity="0.99"/><path d="M108.4,275 Q110.0,268.9 109.7,264.8 Q110.7,269.9 111.9,275 Z" fill="url(#g1)" opacity="0.63"/><path d="M109.5,275 Q110.2,260.1 108.9,250.2 Q110.5,262.6 111.9,275 Z" fill="url(#g2)" opacity="0.62"/><path d="M21.6,275 Q23.9,258.7 26.2,247.8 Q24.7,261.4 24.1,275 Z" fill="url(#g2)" opacity="0.70"/><path d="M126.5,275 Q127.2,265.8 126.6,259.7 Q127.4,267.4 128.3,275 Z" fill="url(#g2)" opacity="0.71"/><path d="M84.9,275 Q86.6,266.5 88.1,260.8 Q87.2,267.9 86.9,275 Z" fill="url(#g1)" opacity="0.76"/><path d="M2.5,275 Q3.8,268.8 4.2,264.6 Q4.3,269.8 4.7,275 Z" fill="url(#g3)" opacity="0.94"/><path d="M17.3,275 Q19.4,259.9 20.7,249.8 Q20.1,262.4 20.3,275 Z" fill="url(#g4)" opacity="0.99"/><path d="M17.1,275 Q18.7,261.6 20.4,252.7 Q19.3,263.8 19.0,275 Z" fill="url(#g3)" opacity="0.85"/><path d="M94.9,275 Q96.3,260.7 96.4,251.2 Q96.9,263.1 97.8,275 Z" fill="url(#g1)" opacity="0.93"/><path d="M74.7,275 Q75.7,259.9 74.4,249.8 Q76.1,262.4 77.9,275 Z" fill="url(#g1)" opacity="0.62"/><path d="M82.0,275 Q82.4,259.2 80.2,248.7 Q82.7,261.8 84.7,275 Z" fill="url(#g1)" opacity="0.85"/><path d="M87.6,275 Q89.2,257.1 89.2,245.2 Q89.9,260.1 90.9,275 Z" fill="url(#g3)" opacity="0.64"/><path d="M66.8,275 Q69.2,261.4 70.9,252.3 Q70.1,263.7 70.2,275 Z" fill="url(#g1)" opacity="0.89"/><path d="M24.1,275 Q25.3,261.5 24.7,252.4 Q25.7,263.7 26.9,275 Z" fill="url(#g2)" opacity="0.96"/><path d="M35.4,275 Q36.7,268.5 37.2,264.2 Q37.2,269.6 37.6,275 Z" fill="url(#g2)" opacity="0.70"/><path d="M96.7,275 Q96.7,265.9 94.5,259.8 Q96.7,267.4 98.5,275 Z" fill="url(#g2)" opacity="0.99"/><path d="M9.7,275 Q10.9,266.8 9.8,261.3 Q11.4,268.1 12.9,275 Z" fill="url(#g2)" opacity="0.79"/><path d="M12.0,275 Q14.8,259.9 16.9,249.8 Q15.9,262.4 15.8,275 Z" fill="url(#g1)" opacity="0.72"/><path d="M6.4,275 Q8.0,263.8 7.5,256.4 Q8.7,265.7 10.1,275 Z" fill="url(#g1)" opacity="0.63"/><path d="M8.8,275 Q10.3,261.4 10.8,252.3 Q10.9,263.6 11.4,275 Z" fill="url(#g4)" opacity="0.80"/><path d="M115.0,275 Q116.8,261.8 116.7,253.0 Q117.5,264.0 118.6,275 Z" fill="url(#g1)" opacity="0.66"/><path d="M123.7,275 Q125.1,262.0 124.7,253.4 Q125.7,264.2 126.9,275 Z" fill="url(#g2)" opacity="0.73"/><path d="M108.9,275 Q109.8,269.0 107.9,265.0 Q110.2,270.0 112.3,275 Z" fill="url(#g1)" opacity="0.89"/><path d="M117.5,275 Q119.9,266.0 122.3,260.1 Q120.7,267.5 120.1,275 Z" fill="url(#g3)" opacity="0.63"/><path d="M120.8,275 Q121.1,261.3 118.9,252.2 Q121.2,263.6 123.2,275 Z" fill="url(#g4)" opacity="0.71"/><path d="M122.0,275 Q122.7,266.5 121.2,260.8 Q123.1,267.9 124.8,275 Z" fill="url(#g2)" opacity="0.91"/><path d="M54.0,275 Q56.1,268.7 57.9,264.5 Q56.9,269.8 56.6,275 Z" fill="url(#g3)" opacity="0.82"/><path d="M93.1,275 Q95.0,268.5 96.2,264.2 Q95.7,269.6 95.8,275 Z" fill="url(#g4)" opacity="0.95"/><path d="M62.0,275 Q62.9,259.7 62.5,249.5 Q63.3,262.2 64.1,275 Z" fill="url(#g2)" opacity="0.72"/><path d="M95.5,275 Q96.6,259.0 95.6,248.4 Q97.1,261.7 98.6,275 Z" fill="url(#g3)" opacity="0.87"/><path d="M12.3,275 Q14.2,258.2 14.4,247.0 Q14.9,261.0 15.8,275 Z" fill="url(#g2)" opacity="0.96"/><path d="M130.4,275 Q130.7,264.4 128.7,257.4 Q130.8,266.2 132.6,275 Z" fill="url(#g2)" opacity="0.82"/><path d="M39.7,275 Q39.8,265.2 37.4,258.7 Q39.9,266.9 41.9,275 Z" fill="url(#g2)" opacity="0.75"/><path d="M96.3,275 Q97.9,266.9 97.9,261.4 Q98.6,268.2 99.6,275 Z" fill="url(#g3)" opacity="0.99"/><path d="M13.1,275 Q14.3,263.9 12.9,256.4 Q14.8,265.7 16.6,275 Z" fill="url(#g2)" opacity="0.96"/><path d="M48.3,275 Q50.2,262.4 51.7,254.0 Q50.9,264.5 50.7,275 Z" fill="url(#g1)" opacity="0.65"/><path d="M53.1,275 Q55.0,261.2 54.9,252.0 Q55.7,263.5 56.8,275 Z" fill="url(#g1)" opacity="0.76"/><path d="M120.3,275 Q121.7,260.6 120.4,251.0 Q122.2,263.0 124.1,275 Z" fill="url(#g1)" opacity="0.69"/><path d="M16.7,275 Q18.8,259.1 19.8,248.5 Q19.6,261.7 20.1,275 Z" fill="url(#g2)" opacity="0.63"/><path d="M100.6,275 Q101.1,269.0 98.9,265.0 Q101.4,270.0 103.6,275 Z" fill="url(#g4)" opacity="0.72"/><path d="M13.5,275 Q14.3,266.4 12.4,260.7 Q14.7,267.9 16.7,275 Z" fill="url(#g1)" opacity="0.72"/><path d="M122.7,275 Q123.4,267.0 120.9,261.7 Q123.7,268.4 126.1,275 Z" fill="url(#g3)" opacity="0.72"/><path d="M57.9,275 Q59.7,259.2 59.6,248.7 Q60.4,261.8 61.5,275 Z" fill="url(#g1)" opacity="0.82"/><path d="M1.0,275 Q1.3,264.8 -0.2,258.0 Q1.4,266.5 2.9,275 Z" fill="url(#g4)" opacity="0.86"/><path d="M7.6,275 Q8.9,266.7 8.8,261.1 Q9.4,268.1 10.1,275 Z" fill="url(#g4)" opacity="0.74"/><path d="M52.7,275 Q54.9,262.0 56.0,253.4 Q55.7,264.2 56.1,275 Z" fill="url(#g3)" opacity="0.63"/><path d="M63.3,275 Q64.3,267.0 64.2,261.6 Q64.8,268.3 65.5,275 Z" fill="url(#g2)" opacity="0.90"/><path d="M36.4,275 Q36.9,259.3 35.6,248.8 Q37.2,261.9 38.6,275 Z" fill="url(#g2)" opacity="0.96"/><path d="M4.6,275 Q4.6,262.9 2.2,254.9 Q4.6,264.9 6.5,275 Z" fill="url(#g3)" opacity="0.66"/><path d="M3.1,275 Q5.8,268.4 7.6,264.0 Q6.7,269.5 6.7,275 Z" fill="url(#g4)" opacity="0.65"/><path d="M7.1,275 Q8.7,267.3 8.8,262.2 Q9.3,268.6 10.2,275 Z" fill="url(#g2)" opacity="0.61"/><path d="M85.8,275 Q86.3,265.1 84.7,258.6 Q86.6,266.8 88.3,275 Z" fill="url(#g1)" opacity="0.63"/><path d="M7.4,275 Q9.4,264.7 10.6,257.9 Q10.1,266.4 10.3,275 Z" fill="url(#g2)" opacity="0.74"/><path d="M107.1,275 Q108.0,260.6 107.9,251.0 Q108.4,263.0 109.0,275 Z" fill="url(#g2)" opacity="0.82"/><path d="M56.4,275 Q58.1,265.7 58.7,259.5 Q58.7,267.3 59.2,275 Z" fill="url(#g1)" opacity="0.92"/><path d="M98.9,275 Q100.2,259.8 99.0,249.6 Q100.8,262.3 102.6,275 Z" fill="url(#g4)" opacity="0.63"/><path d="M77.3,275 Q78.2,265.3 76.0,258.8 Q78.6,266.9 81.0,275 Z" fill="url(#g4)" opacity="0.89"/><path d="M38.6,275 Q40.7,257.3 41.3,245.5 Q41.5,260.2 42.2,275 Z" fill="url(#g1)" opacity="0.61"/><path d="M27.5,275 Q29.1,264.2 28.5,256.9 Q29.8,266.0 31.2,275 Z" fill="url(#g2)" opacity="0.97"/><path d="M106.3,275 Q108.1,267.6 110.2,262.7 Q108.8,268.9 108.1,275 Z" fill="url(#g2)" opacity="0.93"/><path d="M100.3,275 Q101.3,262.8 100.6,254.7 Q101.7,264.8 102.8,275 Z" fill="url(#g3)" opacity="0.63"/><path d="M23.5,275 Q23.5,261.3 21.2,252.2 Q23.5,263.6 25.4,275 Z" fill="url(#g3)" opacity="0.82"/><path d="M18.6,275 Q19.8,264.6 20.4,257.7 Q20.3,266.4 20.5,275 Z" fill="url(#g1)" opacity="0.64"/><path d="M63.7,275 Q64.6,261.8 64.2,252.9 Q65.0,264.0 65.9,275 Z" fill="url(#g3)" opacity="0.96"/><path d="M27.8,275 Q30.1,263.5 31.4,255.8 Q30.9,265.4 31.1,275 Z" fill="url(#g2)" opacity="0.72"/><path d="M72.9,275 Q73.4,265.2 72.2,258.7 Q73.7,266.8 75.1,275 Z" fill="url(#g1)" opacity="0.69"/><path d="M34.7,275 Q35.2,259.7 34.0,249.6 Q35.4,262.3 36.7,275 Z" fill="url(#g1)" opacity="0.80"/><path d="M27.1,275 Q28.2,260.8 26.2,251.3 Q28.6,263.1 30.9,275 Z" fill="url(#g2)" opacity="0.95"/><path d="M27.2,275 Q28.4,264.4 27.1,257.4 Q28.9,266.2 30.7,275 Z" fill="url(#g1)" opacity="0.68"/><path d="M127.1,275 Q129.1,263.1 130.9,255.1 Q129.9,265.0 129.6,275 Z" fill="url(#g2)" opacity="0.84"/><path d="M100.2,275 Q101.5,257.7 100.8,246.2 Q102.1,260.6 103.5,275 Z" fill="url(#g1)" opacity="0.75"/><path d="M15.4,275 Q17.3,266.9 18.0,261.5 Q18.0,268.3 18.4,275 Z" fill="url(#g1)" opacity="0.93"/><path d="M106.2,275 Q106.8,264.8 104.8,258.0 Q107.2,266.5 109.2,275 Z" fill="url(#g1)" opacity="0.92"/><path d="M70.1,275 Q71.5,268.4 71.8,263.9 Q72.1,269.5 72.7,275 Z" fill="url(#g4)" opacity="0.81"/><path d="M83.6,275 Q85.9,264.9 86.7,258.2 Q86.7,266.6 87.4,275 Z" fill="url(#g2)" opacity="0.98"/><path d="M38.5,275 Q40.6,263.2 42.4,255.4 Q41.4,265.2 41.2,275 Z" fill="url(#g2)" opacity="0.86"/><path d="M49.0,275 Q49.6,264.9 48.0,258.1 Q49.9,266.6 51.7,275 Z" fill="url(#g1)" opacity="0.93"/><path d="M51.4,275 Q51.4,260.0 49.0,250.0 Q51.5,262.5 53.5,275 Z" fill="url(#g3)" opacity="0.66"/><path d="M104.2,275 Q106.6,265.0 107.7,258.3 Q107.5,266.6 107.9,275 Z" fill="url(#g1)" opacity="0.66"/><path d="M35.0,275 Q35.9,263.7 35.9,256.1 Q36.3,265.6 37.0,275 Z" fill="url(#g1)" opacity="0.72"/><path d="M109.0,275 Q110.4,268.6 111.0,264.3 Q111.0,269.6 111.4,275 Z" fill="url(#g4)" opacity="0.76"/><path d="M118.1,275 Q119.8,262.7 121.2,254.5 Q120.4,264.7 120.2,275 Z" fill="url(#g1)" opacity="0.85"/><path d="M78.9,275 Q79.4,267.0 77.2,261.7 Q79.7,268.3 81.8,275 Z" fill="url(#g3)" opacity="0.66"/><path d="M44.4,275 Q45.5,267.5 44.0,262.5 Q46.0,268.7 47.8,275 Z" fill="url(#g3)" opacity="0.94"/><path d="M86.8,275 Q88.0,262.2 87.8,253.6 Q88.5,264.3 89.4,275 Z" fill="url(#g4)" opacity="0.91"/><path d="M83.7,275 Q84.7,265.9 84.0,259.8 Q85.1,267.4 86.3,275 Z" fill="url(#g3)" opacity="0.78"/><path d="M-0.0,275 Q1.7,262.7 3.0,254.5 Q2.3,264.7 2.3,275 Z" fill="url(#g2)" opacity="0.93"/><path d="M105.3,275 Q107.2,258.7 108.7,247.8 Q108.0,261.4 107.9,275 Z" fill="url(#g3)" opacity="0.80"/><path d="M1.8,275 Q3.5,257.4 3.5,245.6 Q4.2,260.3 5.1,275 Z" fill="url(#g1)" opacity="0.90"/><path d="M117.0,275 Q117.0,262.3 114.9,253.9 Q117.1,264.5 118.8,275 Z" fill="url(#g3)" opacity="0.89"/><path d="M105.8,275 Q108.2,267.0 110.4,261.7 Q109.0,268.4 108.6,275 Z" fill="url(#g1)" opacity="0.87"/><path d="M93.1,275 Q94.1,266.7 92.9,261.2 Q94.5,268.1 96.1,275 Z" fill="url(#g2)" opacity="0.96"/><path d="M33.4,275 Q35.7,260.7 37.8,251.1 Q36.6,263.1 36.3,275 Z" fill="url(#g1)" opacity="0.84"/><path d="M79.4,275 Q80.3,266.6 79.9,261.0 Q80.7,268.0 81.6,275 Z" fill="url(#g4)" opacity="0.97"/><path d="M87.4,275 Q88.3,259.9 86.4,249.8 Q88.7,262.4 90.8,275 Z" fill="url(#g3)" opacity="0.62"/><path d="M111.6,275 Q113.4,259.1 114.3,248.6 Q114.1,261.8 114.4,275 Z" fill="url(#g1)" opacity="0.70"/><path d="M68.5,275 Q69.5,260.3 68.9,250.4 Q69.9,262.7 71.1,275 Z" fill="url(#g2)" opacity="0.83"/><path d="M45.2,275 Q46.8,261.2 48.0,252.0 Q47.4,263.5 47.4,275 Z" fill="url(#g1)" opacity="0.72"/><path d="M65.4,275 Q68.1,265.8 70.2,259.7 Q69.1,267.4 68.9,275 Z" fill="url(#g2)" opacity="0.89"/><path d="M96.6,275 Q97.9,266.7 97.5,261.2 Q98.5,268.1 99.6,275 Z" fill="url(#g2)" opacity="0.96"/><path d="M14.8,275 Q14.6,266.7 12.2,261.1 Q14.7,268.1 16.6,275 Z" fill="url(#g2)" opacity="0.72"/><path d="M66.9,275 Q67.3,263.6 65.5,255.9 Q67.5,265.5 69.3,275 Z" fill="url(#g2)" opacity="0.85"/><path d="M60.5,275 Q60.9,267.6 59.2,262.7 Q61.1,268.9 62.8,275 Z" fill="url(#g1)" opacity="0.63"/><path d="M15.7,275 Q18.4,262.2 20.7,253.7 Q19.4,264.3 19.1,275 Z" fill="url(#g1)" opacity="0.86"/><path d="M72.0,275 Q74.3,265.4 76.4,259.0 Q75.1,267.0 74.7,275 Z" fill="url(#g4)" opacity="0.80"/><path d="M19.0,275 Q19.4,259.9 17.7,249.8 Q19.6,262.4 21.2,275 Z" fill="url(#g1)" opacity="0.60"/><path d="M70.7,275 Q72.1,259.4 72.6,249.0 Q72.6,262.0 72.9,275 Z" fill="url(#g3)" opacity="0.86"/><path d="M52.7,275 Q53.9,262.7 54.5,254.6 Q54.4,264.8 54.6,275 Z" fill="url(#g4)" opacity="0.91"/><path d="M92.2,275 Q93.8,268.9 93.6,264.9 Q94.4,269.9 95.5,275 Z" fill="url(#g4)" opacity="0.86"/><path d="M20.0,275 Q20.7,258.8 18.9,248.1 Q21.1,261.5 23.0,275 Z" fill="url(#g4)" opacity="0.97"/><path d="M122.8,275 Q124.7,257.7 125.6,246.2 Q125.5,260.6 125.9,275 Z" fill="url(#g3)" opacity="0.99"/><path d="M36.6,275 Q37.6,259.5 37.7,249.2 Q38.0,262.1 38.6,275 Z" fill="url(#g1)" opacity="0.70"/><path d="M28.0,275 Q29.3,261.4 28.4,252.4 Q29.8,263.7 31.3,275 Z" fill="url(#g2)" opacity="0.73"/><path d="M28.5,275 Q30.4,259.7 31.2,249.6 Q31.1,262.3 31.6,275 Z" fill="url(#g3)" opacity="0.79"/><path d="M109.2,275 Q111.0,261.9 112.1,253.1 Q111.7,264.1 111.9,275 Z" fill="url(#g3)" opacity="0.95"/><path d="M102.3,275 Q103.1,265.0 101.5,258.3 Q103.4,266.7 105.2,275 Z" fill="url(#g1)" opacity="0.61"/><path d="M11.3,275 Q11.3,259.5 9.0,249.2 Q11.4,262.1 13.3,275 Z" fill="url(#g1)" opacity="0.66"/><path d="M82.5,275 Q84.8,259.8 86.1,249.7 Q85.7,262.4 86.0,275 Z" fill="url(#g1)" opacity="0.93"/><path d="M106.0,275 Q108.8,256.9 110.9,244.8 Q109.8,259.9 109.6,275 Z" fill="url(#g1)" opacity="0.70"/><path d="M23.4,275 Q25.8,268.7 27.0,264.4 Q26.7,269.7 27.0,275 Z" fill="url(#g1)" opacity="0.93"/><path d="M81.0,275 Q82.0,259.6 80.6,249.4 Q82.5,262.2 84.3,275 Z" fill="url(#g2)" opacity="0.73"/><path d="M32.0,275 Q33.5,265.4 34.8,259.0 Q34.1,267.0 33.9,275 Z" fill="url(#g2)" opacity="0.91"/><path d="M77.0,275 Q79.3,264.1 80.7,256.9 Q80.1,266.0 80.3,275 Z" fill="url(#g1)" opacity="0.77"/><path d="M100.1,275 Q101.0,265.5 99.6,259.1 Q101.4,267.1 103.0,275 Z" fill="url(#g1)" opacity="0.83"/><path d="M35.3,275 Q37.0,264.6 38.2,257.6 Q37.6,266.3 37.7,275 Z" fill="url(#g1)" opacity="0.60"/><path d="M62.7,275 Q63.8,264.0 63.7,256.6 Q64.2,265.8 64.9,275 Z" fill="url(#g2)" opacity="0.98"/><path d="M65.3,275 Q67.9,263.1 70.1,255.2 Q68.9,265.1 68.7,275 Z" fill="url(#g1)" opacity="0.80"/><path d="M11.1,275 Q13.3,257.2 14.7,245.3 Q14.2,260.1 14.3,275 Z" fill="url(#g4)" opacity="0.73"/><path d="M9.1,275 Q10.6,259.5 10.2,249.2 Q11.2,262.1 12.4,275 Z" fill="url(#g4)" opacity="0.61"/><path d="M24.2,275 Q25.4,266.3 24.8,260.5 Q25.8,267.8 27.0,275 Z" fill="url(#g4)" opacity="0.69"/><path d="M58.1,275 Q60.1,263.6 60.8,256.0 Q60.8,265.5 61.4,275 Z" fill="url(#g2)" opacity="0.83"/><path d="M66.5,275 Q67.5,260.1 66.7,250.2 Q68.0,262.6 69.4,275 Z" fill="url(#g2)" opacity="0.78"/><path d="M100.3,275 Q102.4,263.1 104.3,255.2 Q103.3,265.1 103.0,275 Z" fill="url(#g1)" opacity="0.80"/><path d="M32.3,275 Q34.3,261.3 35.4,252.2 Q35.1,263.6 35.4,275 Z" fill="url(#g1)" opacity="0.89"/><path d="M76.9,275 Q78.3,265.4 77.1,259.1 Q78.9,267.0 80.6,275 Z" fill="url(#g4)" opacity="1.00"/><path d="M19.0,275 Q19.3,262.3 17.6,253.8 Q19.5,264.4 21.1,275 Z" fill="url(#g2)" opacity="0.89"/><path d="M55.3,275 Q55.7,267.0 54.2,261.7 Q55.9,268.3 57.3,275 Z" fill="url(#g2)" opacity="0.79"/><path d="M-1.4,275 Q0.7,260.3 3.1,250.5 Q1.5,262.7 0.8,275 Z" fill="url(#g2)" opacity="0.79"/><path d="M15.4,275 Q17.9,262.8 19.9,254.7 Q18.8,264.9 18.6,275 Z" fill="url(#g2)" opacity="0.88"/><path d="M75.1,275 Q77.0,262.4 77.8,254.0 Q77.8,264.5 78.3,275 Z" fill="url(#g4)" opacity="0.88"/><path d="M110.9,275 Q111.8,262.1 110.9,253.4 Q112.2,264.2 113.6,275 Z" fill="url(#g4)" opacity="0.88"/><path d="M116.3,275 Q117.2,266.5 115.5,260.9 Q117.6,267.9 119.5,275 Z" fill="url(#g2)" opacity="0.79"/><path d="M-0.9,275 Q1.4,260.2 3.2,250.4 Q2.3,262.7 2.2,275 Z" fill="url(#g4)" opacity="0.73"/><path d="M-1.6,275 Q-1.1,260.5 -2.3,250.9 Q-0.9,262.9 0.4,275 Z" fill="url(#g1)" opacity="0.66"/><path d="M101.8,275 Q102.9,259.4 103.3,249.0 Q103.4,262.0 103.8,275 Z" fill="url(#g3)" opacity="0.68"/><path d="M60.5,275 Q61.4,268.8 60.6,264.7 Q61.8,269.9 63.0,275 Z" fill="url(#g4)" opacity="0.98"/><path d="M24.5,275 Q25.4,262.0 23.5,253.4 Q25.8,264.2 27.8,275 Z" fill="url(#g3)" opacity="0.74"/><path d="M4.7,275 Q5.4,266.2 5.0,260.3 Q5.7,267.7 6.5,275 Z" fill="url(#g2)" opacity="0.85"/><path d="M87.2,275 Q88.2,263.1 87.7,255.1 Q88.6,265.1 89.6,275 Z" fill="url(#g3)" opacity="0.99"/><path d="M130.2,275 Q132.1,259.2 134.2,248.7 Q132.9,261.8 132.3,275 Z" fill="url(#g1)" opacity="0.92"/><path d="M81.9,275 Q84.0,264.2 86.2,257.0 Q84.7,266.0 84.1,275 Z" fill="url(#g2)" opacity="0.87"/><path d="M107.4,275 Q109.9,260.9 111.1,251.5 Q110.8,263.2 111.2,275 Z" fill="url(#g4)" opacity="0.65"/><path d="M108.6,275 Q109.5,265.4 108.9,259.0 Q109.8,267.0 110.9,275 Z" fill="url(#g2)" opacity="0.99"/><path d="M87.3,275 Q88.7,264.1 88.0,256.8 Q89.2,265.9 90.7,275 Z" fill="url(#g4)" opacity="0.72"/><path d="M60.7,275 Q62.0,264.6 61.3,257.7 Q62.5,266.4 63.8,275 Z" fill="url(#g2)" opacity="0.94"/><path d="M4.0,275 Q4.9,260.6 3.1,250.9 Q5.3,263.0 7.3,275 Z" fill="url(#g2)" opacity="0.85"/><path d="M-1.5,275 Q-0.5,268.9 -1.7,264.8 Q-0.1,269.9 1.6,275 Z" fill="url(#g1)" opacity="0.83"/><path d="M110.8,275 Q111.8,267.1 110.4,261.8 Q112.3,268.4 114.1,275 Z" fill="url(#g2)" opacity="0.92"/><path d="M18.8,275 Q20.9,259.9 21.7,249.9 Q21.6,262.4 22.2,275 Z" fill="url(#g3)" opacity="0.92"/><path d="M109.0,275 Q110.9,267.0 112.1,261.6 Q111.6,268.3 111.8,275 Z" fill="url(#g2)" opacity="0.87"/><path d="M11.9,275 Q13.6,267.8 13.5,263.0 Q14.3,269.0 15.4,275 Z" fill="url(#g3)" opacity="0.62"/><path d="M59.2,275 Q60.7,267.5 60.9,262.5 Q61.3,268.8 62.0,275 Z" fill="url(#g4)" opacity="0.60"/><path d="M109.1,275 Q111.4,264.2 113.0,257.0 Q112.2,266.0 112.2,275 Z" fill="url(#g2)" opacity="0.77"/><path d="M130.7,275 Q132.3,262.1 133.0,253.5 Q132.9,264.3 133.3,275 Z" fill="url(#g1)" opacity="0.84"/><path d="M87.6,275 Q89.5,259.5 89.5,249.2 Q90.2,262.1 91.3,275 Z" fill="url(#g2)" opacity="0.90"/><path d="M16.3,275 Q16.5,266.8 14.5,261.4 Q16.6,268.2 18.4,275 Z" fill="url(#g4)" opacity="0.75"/><path d="M60.5,275 Q61.5,263.6 61.1,256.1 Q61.9,265.5 62.7,275 Z" fill="url(#g2)" opacity="0.70"/><path d="M3.7,275 Q4.7,266.1 3.9,260.1 Q5.2,267.5 6.5,275 Z" fill="url(#g2)" opacity="0.95"/><path d="M43.2,275 Q43.6,266.9 42.1,261.5 Q43.8,268.3 45.2,275 Z" fill="url(#g4)" opacity="0.72"/><path d="M75.6,275 Q77.1,262.5 78.1,254.2 Q77.6,264.6 77.5,275 Z" fill="url(#g2)" opacity="0.82"/><path d="M2.8,275 Q4.9,259.3 5.4,248.9 Q5.7,261.9 6.5,275 Z" fill="url(#g4)" opacity="0.62"/><path d="M64.1,275 Q65.5,263.5 66.3,255.8 Q66.0,265.4 66.2,275 Z" fill="url(#g4)" opacity="0.84"/><path d="M87.9,275 Q89.8,266.8 91.1,261.4 Q90.5,268.2 90.6,275 Z" fill="url(#g1)" opacity="0.87"/><path d="M112.6,275 Q113.5,264.7 111.1,257.8 Q113.8,266.4 116.3,275 Z" fill="url(#g1)" opacity="0.91"/><path d="M72.0,275 Q72.9,266.4 72.1,260.6 Q73.3,267.8 74.6,275 Z" fill="url(#g2)" opacity="0.83"/><path d="M74.1,275 Q76.2,259.7 77.8,249.5 Q77.0,262.2 76.9,275 Z" fill="url(#g2)" opacity="0.83"/><path d="M119.6,275 Q122.0,258.6 124.2,247.7 Q122.9,261.3 122.6,275 Z" fill="url(#g1)" opacity="0.79"/><path d="M52.2,275 Q52.5,268.0 50.8,263.3 Q52.7,269.1 54.4,275 Z" fill="url(#g1)" opacity="0.77"/><path d="M-2.5,275 Q-1.3,262.2 -2.7,253.6 Q-0.8,264.3 1.0,275 Z" fill="url(#g1)" opacity="0.65"/><path d="M-1.3,275 Q-0.3,261.7 -1.8,252.8 Q0.2,263.9 2.0,275 Z" fill="url(#g1)" opacity="0.75"/><path d="M96.5,275 Q97.7,261.9 96.7,253.2 Q98.2,264.1 99.8,275 Z" fill="url(#g3)" opacity="0.88"/><path d="M57.9,275 Q60.2,259.5 61.2,249.2 Q61.1,262.1 61.6,275 Z" fill="url(#g1)" opacity="0.62"/><path d="M115.1,275 Q116.0,262.0 115.1,253.3 Q116.4,264.2 117.7,275 Z" fill="url(#g3)" opacity="0.67"/><path d="M111.9,275 Q113.2,258.7 112.9,247.8 Q113.8,261.4 114.8,275 Z" fill="url(#g4)" opacity="0.67"/><path d="M126.4,275 Q128.1,267.8 129.6,263.0 Q128.8,269.0 128.6,275 Z" fill="url(#g2)" opacity="0.75"/><path d="M101.9,275 Q102.9,259.4 101.9,248.9 Q103.4,262.0 104.8,275 Z" fill="url(#g1)" opacity="0.85"/><path d="M83.5,275 Q85.7,260.8 86.8,251.4 Q86.6,263.2 87.0,275 Z" fill="url(#g1)" opacity="0.93"/><path d="M76.8,275 Q78.3,265.9 77.7,259.8 Q78.9,267.4 80.3,275 Z" fill="url(#g4)" opacity="0.75"/><path d="M99.8,275 Q101.0,266.6 100.1,261.0 Q101.5,268.0 103.0,275 Z" fill="url(#g2)" opacity="0.77"/><path d="M75.7,275 Q77.3,260.7 78.9,251.1 Q77.9,263.1 77.6,275 Z" fill="url(#g3)" opacity="0.66"/><path d="M127.0,275 Q128.7,260.9 128.7,251.4 Q129.4,263.2 130.4,275 Z" fill="url(#g3)" opacity="0.63"/><path d="M70.5,275 Q73.1,260.9 75.2,251.4 Q74.1,263.2 73.8,275 Z" fill="url(#g1)" opacity="0.72"/><path d="M3.9,275 Q5.9,265.0 6.3,258.3 Q6.7,266.6 7.5,275 Z" fill="url(#g1)" opacity="0.92"/><path d="M57.9,275 Q59.0,268.1 57.7,263.5 Q59.5,269.3 61.3,275 Z" fill="url(#g3)" opacity="0.81"/><path d="M31.4,275 Q32.2,260.5 30.7,250.8 Q32.5,262.9 34.2,275 Z" fill="url(#g1)" opacity="0.68"/><path d="M20.7,275 Q22.0,261.8 21.5,253.1 Q22.5,264.0 23.7,275 Z" fill="url(#g3)" opacity="0.94"/><path d="M29.2,275 Q30.7,259.6 30.1,249.3 Q31.4,262.2 32.8,275 Z" fill="url(#g2)" opacity="0.91"/><path d="M17.5,275 Q17.9,262.9 15.6,254.8 Q18.2,264.9 20.3,275 Z" fill="url(#g1)" opacity="0.68"/><path d="M113.6,275 Q115.6,263.2 117.7,255.4 Q116.3,265.2 115.8,275 Z" fill="url(#g2)" opacity="0.77"/><path d="M123.0,275 Q124.3,261.2 123.1,252.0 Q124.9,263.5 126.7,275 Z" fill="url(#g1)" opacity="0.74"/><path d="M130.0,275 Q131.7,259.9 132.7,249.8 Q132.4,262.4 132.5,275 Z" fill="url(#g2)" opacity="0.98"/><path d="M118.6,275 Q119.1,268.3 117.3,263.9 Q119.4,269.5 121.2,275 Z" fill="url(#g1)" opacity="0.70"/><path d="M72.1,275 Q73.4,262.5 72.9,254.1 Q74.0,264.6 75.2,275 Z" fill="url(#g2)" opacity="0.94"/><path d="M46.6,275 Q48.6,266.6 50.8,261.0 Q49.4,268.0 48.8,275 Z" fill="url(#g2)" opacity="0.62"/><path d="M70.9,275 Q72.1,268.7 72.2,264.5 Q72.6,269.8 73.2,275 Z" fill="url(#g4)" opacity="0.86"/><path d="M128.4,275 Q131.0,268.4 133.1,264.1 Q131.9,269.5 131.7,275 Z" fill="url(#g4)" opacity="0.90"/><path d="M75.7,275 Q76.8,264.5 76.1,257.5 Q77.2,266.2 78.4,275 Z" fill="url(#g2)" opacity="0.65"/><path d="M61.5,275 Q62.9,267.3 63.7,262.1 Q63.4,268.6 63.5,275 Z" fill="url(#g1)" opacity="0.79"/><path d="M118.6,275 Q119.4,260.9 117.3,251.4 Q119.8,263.2 122.0,275 Z" fill="url(#g3)" opacity="0.95"/><path d="M116.1,275 Q118.0,267.6 120.1,262.6 Q118.7,268.8 118.1,275 Z" fill="url(#g1)" opacity="0.85"/><path d="M57.2,275 Q58.9,265.5 59.5,259.2 Q59.5,267.1 60.0,275 Z" fill="url(#g1)" opacity="0.73"/><path d="M94.8,275 Q96.5,267.2 96.2,261.9 Q97.2,268.5 98.4,275 Z" fill="url(#g1)" opacity="0.71"/><path d="M51.4,275 Q52.8,267.4 52.0,262.4 Q53.4,268.7 54.9,275 Z" fill="url(#g1)" opacity="0.70"/><path d="M11.6,275 Q12.7,264.3 12.7,257.2 Q13.1,266.1 13.7,275 Z" fill="url(#g4)" opacity="0.96"/><path d="M86.4,275 Q87.0,266.8 85.9,261.4 Q87.3,268.2 88.7,275 Z" fill="url(#g1)" opacity="0.99"/><path d="M54.8,275 Q55.7,266.3 55.1,260.6 Q56.0,267.8 57.0,275 Z" fill="url(#g2)" opacity="0.96"/><path d="M3.8,275 Q4.7,261.6 2.3,252.6 Q5.1,263.8 7.6,275 Z" fill="url(#g3)" opacity="0.74"/><path d="M15.4,275 Q16.1,269.0 14.6,265.0 Q16.5,270.0 18.2,275 Z" fill="url(#g2)" opacity="0.62"/><path d="M51.1,275 Q52.8,266.2 52.9,260.3 Q53.6,267.6 54.5,275 Z" fill="url(#g1)" opacity="0.88"/><path d="M23.0,275 Q23.9,257.8 22.8,246.3 Q24.3,260.7 25.8,275 Z" fill="url(#g1)" opacity="0.65"/><path d="M86.6,275 Q86.7,262.6 84.3,254.3 Q86.9,264.7 89.0,275 Z" fill="url(#g4)" opacity="0.89"/><path d="M51.5,275 Q53.4,257.1 55.1,245.1 Q54.1,260.1 53.9,275 Z" fill="url(#g2)" opacity="0.64"/><path d="M51.3,275 Q52.3,261.2 51.1,252.0 Q52.8,263.5 54.4,275 Z" fill="url(#g3)" opacity="0.93"/><path d="M45.7,275 Q46.2,267.3 43.7,262.2 Q46.4,268.6 48.7,275 Z" fill="url(#g3)" opacity="0.97"/><path d="M126.7,275 Q128.5,268.3 130.1,263.8 Q129.2,269.4 129.0,275 Z" fill="url(#g2)" opacity="0.91"/><path d="M113.1,275 Q113.5,263.1 111.6,255.2 Q113.7,265.1 115.5,275 Z" fill="url(#g4)" opacity="0.80"/><path d="M65.9,275 Q67.8,263.6 70.1,256.0 Q68.5,265.5 67.7,275 Z" fill="url(#g1)" opacity="0.85"/><path d="M18.6,275 Q19.5,265.8 17.1,259.7 Q19.9,267.3 22.4,275 Z" fill="url(#g4)" opacity="0.90"/><path d="M31.7,275 Q32.5,260.5 31.2,250.8 Q32.8,262.9 34.4,275 Z" fill="url(#g2)" opacity="0.64"/><path d="M113.1,275 Q114.5,259.6 114.5,249.3 Q115.1,262.1 115.9,275 Z" fill="url(#g2)" opacity="0.64"/><path d="M13.2,275 Q13.7,260.0 12.4,250.0 Q14.0,262.5 15.4,275 Z" fill="url(#g4)" opacity="0.83"/><path d="M96.2,275 Q97.8,267.3 97.3,262.2 Q98.5,268.6 99.9,275 Z" fill="url(#g2)" opacity="0.84"/><path d="M77.8,275 Q78.5,268.6 77.8,264.4 Q78.8,269.7 79.7,275 Z" fill="url(#g2)" opacity="0.70"/><path d="M41.2,275 Q43.8,264.6 45.8,257.6 Q44.7,266.3 44.6,275 Z" fill="url(#g2)" opacity="0.94"/><path d="M3.3,275 Q4.6,263.7 3.4,256.2 Q5.2,265.6 7.0,275 Z" fill="url(#g2)" opacity="0.87"/><path d="M-1.7,275 Q-1.1,267.9 -2.5,263.1 Q-0.8,269.1 0.8,275 Z" fill="url(#g4)" opacity="0.61"/><path d="M14.8,275 Q17.0,259.1 17.6,248.5 Q17.8,261.8 18.5,275 Z" fill="url(#g1)" opacity="0.61"/><path d="M82.8,275 Q84.1,266.3 84.3,260.5 Q84.6,267.7 85.1,275 Z" fill="url(#g1)" opacity="0.85"/><path d="M29.7,275 Q31.1,263.7 30.1,256.2 Q31.7,265.6 33.4,275 Z" fill="url(#g2)" opacity="0.74"/><path d="M18.6,275 Q21.2,268.4 23.2,264.0 Q22.2,269.5 22.2,275 Z" fill="url(#g1)" opacity="0.79"/><path d="M68.5,275 Q69.1,267.5 68.1,262.5 Q69.4,268.7 70.6,275 Z" fill="url(#g2)" opacity="0.83"/><path d="M33.5,275 Q34.6,261.5 34.4,252.5 Q35.1,263.7 35.9,275 Z" fill="url(#g4)" opacity="0.83"/><path d="M83.8,275 Q85.2,266.9 85.5,261.6 Q85.8,268.3 86.5,275 Z" fill="url(#g3)" opacity="0.79"/><path d="M106.6,275 Q107.8,268.7 108.0,264.5 Q108.3,269.7 108.8,275 Z" fill="url(#g3)" opacity="0.76"/><path d="M120.6,275 Q121.5,267.3 120.6,262.2 Q121.8,268.6 123.1,275 Z" fill="url(#g2)" opacity="0.71"/><path d="M129.3,275 Q129.4,266.0 127.3,260.0 Q129.5,267.5 131.4,275 Z" fill="url(#g2)" opacity="0.78"/><path d="M4.7,275 Q5.5,265.0 3.6,258.4 Q5.9,266.7 7.9,275 Z" fill="url(#g1)" opacity="1.00"/><path d="M87.2,275 Q88.1,259.5 86.3,249.1 Q88.4,262.1 90.4,275 Z" fill="url(#g1)" opacity="0.85"/><path d="M110.3,275 Q112.4,260.6 113.6,251.0 Q113.2,263.0 113.5,275 Z" fill="url(#g2)" opacity="0.71"/><path d="M81.2,275 Q81.7,262.6 79.7,254.3 Q81.9,264.6 83.8,275 Z" fill="url(#g2)" opacity="0.91"/><path d="M75.0,275 Q76.3,263.9 75.9,256.5 Q76.9,265.8 78.0,275 Z" fill="url(#g2)" opacity="0.95"/><path d="M78.0,275 Q79.9,265.1 80.9,258.5 Q80.6,266.8 80.7,275 Z" fill="url(#g2)" opacity="0.74"/><path d="M67.6,275 Q69.0,262.9 70.2,254.9 Q69.6,264.9 69.4,275 Z" fill="url(#g2)" opacity="0.75"/><path d="M36.9,275 Q37.9,263.5 37.3,255.9 Q38.4,265.4 39.5,275 Z" fill="url(#g1)" opacity="0.64"/><path d="M119.6,275 Q122.3,265.7 124.5,259.5 Q123.3,267.2 123.0,275 Z" fill="url(#g1)" opacity="0.99"/><path d="M115.6,275 Q117.0,259.1 116.0,248.5 Q117.6,261.7 119.2,275 Z" fill="url(#g3)" opacity="0.91"/><path d="M68.7,275 Q70.5,258.8 71.5,248.0 Q71.2,261.5 71.6,275 Z" fill="url(#g2)" opacity="0.79"/><path d="M2.5,275 Q2.5,262.1 0.4,253.5 Q2.6,264.3 4.4,275 Z" fill="url(#g1)" opacity="0.64"/><path d="M46.7,275 Q49.0,264.9 50.8,258.2 Q49.8,266.6 49.6,275 Z" fill="url(#g2)" opacity="0.79"/><path d="M55.7,275 Q57.0,262.6 57.2,254.4 Q57.6,264.7 58.2,275 Z" fill="url(#g1)" opacity="0.67"/><path d="M39.2,275 Q39.8,259.0 37.9,248.4 Q40.1,261.7 42.0,275 Z" fill="url(#g2)" opacity="0.88"/><path d="M106.6,275 Q107.2,258.9 105.5,248.2 Q107.5,261.6 109.3,275 Z" fill="url(#g2)" opacity="0.93"/><path d="M24.9,275 Q26.0,259.9 26.3,249.8 Q26.4,262.4 26.8,275 Z" fill="url(#g1)" opacity="0.74"/><path d="M129.5,275 Q130.8,258.5 129.8,247.5 Q131.3,261.3 132.8,275 Z" fill="url(#g4)" opacity="0.82"/><path d="M120.0,275 Q120.2,259.9 118.6,249.9 Q120.3,262.5 121.8,275 Z" fill="url(#g3)" opacity="0.83"/><path d="M113.7,275 Q114.1,259.9 112.6,249.8 Q114.3,262.4 115.8,275 Z" fill="url(#g3)" opacity="0.65"/><path d="M18.0,275 Q18.3,261.3 16.7,252.1 Q18.5,263.5 20.0,275 Z" fill="url(#g3)" opacity="0.80"/><path d="M59.1,275 Q61.0,264.6 61.9,257.7 Q61.8,266.3 62.2,275 Z" fill="url(#g3)" opacity="0.73"/><path d="M92.7,275 Q93.0,265.4 91.1,259.0 Q93.2,267.0 95.0,275 Z" fill="url(#g3)" opacity="0.63"/><path d="M22.4,275 Q24.2,259.2 25.5,248.7 Q24.9,261.8 25.0,275 Z" fill="url(#g1)" opacity="0.78"/><path d="M79.3,275 Q80.7,256.6 79.8,244.4 Q81.3,259.7 82.9,275 Z" fill="url(#g2)" opacity="0.72"/></g>
<g transform="translate(18,176) scale(0.13870)" filter="url(#b3)"><path d="M38,36 L320,718" stroke="#3a4852" stroke-width="6"/><path d="M44,40 L272,590" stroke="#e8f3fb" stroke-width="4.5" opacity=".95"/><path d="M262,575 L322,718" stroke="#2a2418" stroke-width="8"/><polygon points="28,62 40,26 60,72" fill="#2f6f9e"/></g>
<circle cx="6.5" cy="265" r="1.5" fill="#fffbd0"/><circle cx="6.5" cy="265" r="0.68" fill="#f5e86a"/>
<circle cx="8" cy="268.5" r="1.1" fill="#fffbd0"/><circle cx="8" cy="268.5" r="0.50" fill="#f5e86a"/>
<circle cx="22.5" cy="264" r="1.9" fill="#fffbd0"/><circle cx="22.5" cy="264" r="0.85" fill="#f5e86a"/>
<circle cx="25.5" cy="267" r="1.2" fill="#fffbd0"/><circle cx="25.5" cy="267" r="0.54" fill="#f5e86a"/>
<circle cx="45" cy="262" r="1.3" fill="#fffbd0"/><circle cx="45" cy="262" r="0.59" fill="#f5e86a"/>
<circle cx="33" cy="270" r="1.1" fill="#fffbd0"/><circle cx="33" cy="270" r="0.50" fill="#f5e86a"/>
<circle cx="17" cy="271" r="1" fill="#fffbd0"/><circle cx="17" cy="271" r="0.45" fill="#f5e86a"/>
<circle cx="19" cy="270" r="0.8" fill="#fffbd0"/><circle cx="19" cy="270" r="0.36" fill="#f5e86a"/>
<circle cx="69" cy="270" r="1" fill="#fffbd0"/><circle cx="69" cy="270" r="0.45" fill="#f5e86a"/>
<circle cx="86" cy="267" r="1.2" fill="#fffbd0"/><circle cx="86" cy="267" r="0.54" fill="#f5e86a"/>
<circle cx="113" cy="269" r="1.1" fill="#fffbd0"/><circle cx="113" cy="269" r="0.50" fill="#f5e86a"/>
<circle cx="124.5" cy="260.5" r="1.9" fill="#fffbd0"/><circle cx="124.5" cy="260.5" r="0.85" fill="#f5e86a"/>
<circle cx="121.5" cy="263.5" r="1.1" fill="#fffbd0"/><circle cx="121.5" cy="263.5" r="0.50" fill="#f5e86a"/>
<circle cx="97" cy="271" r="1" fill="#fffbd0"/><circle cx="97" cy="271" r="0.45" fill="#f5e86a"/>
<circle cx="60" cy="265" r="0.9" fill="#fffbd0"/><circle cx="60" cy="265" r="0.41" fill="#f5e86a"/>
</svg>
</body>
</html>
